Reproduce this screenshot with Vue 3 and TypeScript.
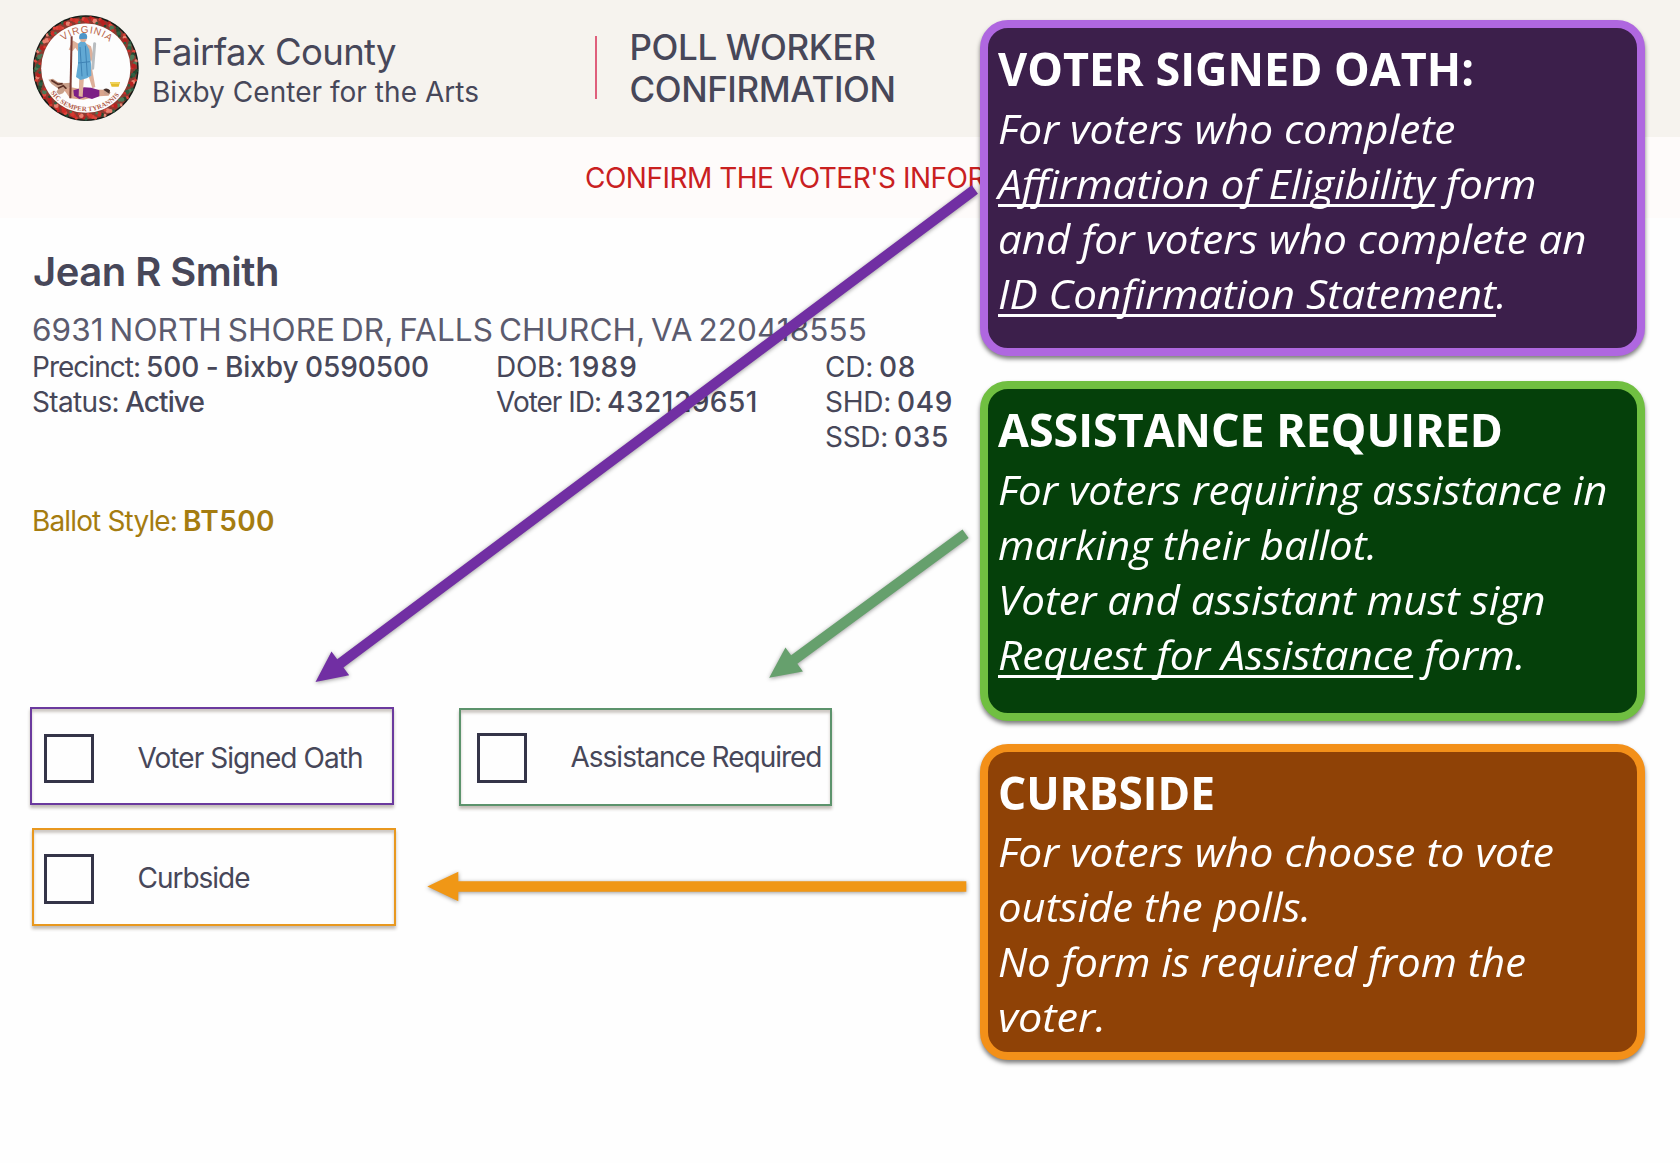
<script setup lang="ts">
import type { Directive } from 'vue'

interface Field { label: string; lw: number; value: string; vw: number }
interface Line { under?: string; text: string; width: number }
interface Callout { tone: string; title: string; titleWidth: number; lines: Line[] }
interface Blob { x: number; y: number; r: number; color: string }

// Tracks a single line of text so that it fills the given width.
const vTrack: Directive<HTMLElement, number> = {
  mounted(el, { value }) {
    const count = (el.textContent ?? '').length
    const natural = el.getBoundingClientRect().width
    el.style.letterSpacing = `${(value - natural) / count}px`
  },
}

// Condenses or widens a line horizontally to the given width.
const vStretch: Directive<HTMLElement, number> = {
  mounted(el, { value }) {
    const natural = el.getBoundingClientRect().width
    el.style.transform = `scaleX(${value / natural})`
  },
}

const columns: { name: string; fields: Field[] }[] = [
  {
    name: 'precinct',
    fields: [
      { label: 'Precinct:', lw: 108, value: '500 - Bixby 0590500', vw: 283 },
      { label: 'Status:', lw: 87, value: 'Active', vw: 79 },
    ],
  },
  {
    name: 'identity',
    fields: [
      { label: 'DOB:', lw: 67, value: '1989', vw: 69 },
      { label: 'Voter ID:', lw: 105, value: '432129651', vw: 151 },
    ],
  },
  {
    name: 'districts',
    fields: [
      { label: 'CD:', lw: 48, value: '08', vw: 37 },
      { label: 'SHD:', lw: 66, value: '049', vw: 56 },
      { label: 'SSD:', lw: 63, value: '035', vw: 55 },
    ],
  },
]

const options = [
  { tone: 'oath', label: 'Voter Signed Oath', width: 225 },
  { tone: 'assist', label: 'Assistance Required', width: 251 },
  { tone: 'curb', label: 'Curbside', width: 112 },
]

const callouts: Callout[] = [
  {
    tone: 'oath',
    title: 'VOTER SIGNED OATH:',
    titleWidth: 476,
    lines: [
      { text: 'For voters who complete', width: 457.5 },
      { under: 'Affirmation of Eligibility', text: ' form', width: 538.5 },
      { text: 'and for voters who complete an', width: 588.5 },
      { under: 'ID Confirmation Statement', text: '.', width: 508.5 },
    ],
  },
  {
    tone: 'assist',
    title: 'ASSISTANCE REQUIRED',
    titleWidth: 505,
    lines: [
      { text: 'For voters requiring assistance in', width: 609.5 },
      { text: 'marking their ballot.', width: 379 },
      { text: 'Voter and assistant must sign', width: 547.5 },
      { under: 'Request for Assistance', text: ' form.', width: 527.5 },
    ],
  },
  {
    tone: 'curb',
    title: 'CURBSIDE',
    titleWidth: 217,
    lines: [
      { text: 'For voters who choose to vote', width: 556 },
      { text: 'outside the polls.', width: 313 },
      { text: 'No form is required from the', width: 528 },
      { text: 'voter.', width: 108 },
    ],
  },
]

// Flowers and leaves of the wreath around the seal.
const palette = ['#d02c28', '#2f5f43', '#e0453c', '#b8201f', '#4c7a58', '#d43a30', '#24482f', '#e88070']
const wreath: Blob[] = []
for (let i = 0; i < 132; i++) {
  const angle = (i / 132) * Math.PI * 2
  const ring = 139 + ((i * 7) % 4) * 4.5
  wreath.push({
    x: 197.5 + Math.cos(angle) * ring,
    y: 189.5 + Math.sin(angle) * ring,
    r: 4 + ((i * 5) % 4),
    color: palette[(i * 5 + ((i * i) % 7)) % palette.length],
  })
}
</script>

<template>
  <div class="page">
    <header class="top">
      <svg class="seal" viewBox="0 0 390 390">
        <circle cx="197.5" cy="189.5" r="158.5" fill="#141a16" />
        <circle cx="197.5" cy="189.5" r="154" fill="#8c3a30" />
        <circle v-for="(b, i) in wreath" :key="i" :cx="b.x" :cy="b.y" :r="b.r" :fill="b.color" />
        <circle cx="197.5" cy="189.5" r="134" fill="#fdfdfd" />
        <path id="seal-top" d="M92 189.500 A105.500 105.500 0 0 1 303 189.500" fill="none" />
        <path id="seal-bottom" d="M68.500 189.500 A129 129 0 0 0 326.500 189.500" fill="none" />
        <text class="seal-name"><textPath href="#seal-top" startOffset="51%" text-anchor="middle">VIRGINIA</textPath></text>
        <text class="seal-motto"><textPath href="#seal-bottom" startOffset="49%" text-anchor="middle">SIC SEMPER TYRANNIS</textPath></text>
        <path d="M85 224 l14 -3 14 10 18 4 20 -2 4 12 -16 6 -10 14 -12 4 -8 -8 6 -10 -20 -14z" fill="#c9a08a" />
        <path d="M94 226 l20 12 14 -2 M114 250 l16 -8 14 14" stroke="#5c3026" stroke-width="5" fill="none" />
        <path d="M132 254 L150 246 180 252 250 254 272 262 266 272 236 274 190 284 150 280z" fill="#d9a48c" />
        <path d="M160 256 L192 247 214 248 238 256 238 274 216 282 196 276 178 282 162 272z" fill="#7c1f86" />
        <circle cx="260" cy="262" r="9" fill="#caa08c" />
        <path d="M250 254 q10 -8 20 2 l-2 10 z" fill="#46302a" />
        <path d="M178 212 L176 274 188 276 192 214z M204 208 L217 250 226 246 216 190z" fill="#deb09a" />
        <path d="M175 116 L158 106 146 134 158 138 166 128 176 142z M196 114 L213 124 220 150 214 170 204 160z" fill="#deb09a" />
        <path d="M174 116 L184 108 196 112 208 134 213 176 214 212 200 220 182 225 168 216 174 176z" fill="#62a9d4" />
        <path d="M180 126 L186 214 M196 122 L202 212 M174 174 L210 170" stroke="#3f83b5" stroke-width="3" fill="none" />
        <circle cx="190" cy="101" r="10" fill="#dcae98" />
        <path d="M178 103 q-3 -22 14 -19 q12 2 9 17z" fill="#4d95c9" />
        <path d="M155 94 L151 280" stroke="#7a3a33" stroke-width="6" />
        <path d="M224 116 L218 190" stroke="#b9bdc0" stroke-width="9" stroke-linecap="round" />
        <path d="M270 231 H300 L296 245 H275z" fill="#e3bd2c" />
        <path d="M273 234 H297" stroke="#fbe98a" stroke-width="3" />
      </svg>
      <div class="place">
        <div class="county"><span v-track="244">Fairfax County</span></div>
        <div class="site"><span v-track="327">Bixby Center for the Arts</span></div>
      </div>
      <div class="rule"></div>
      <div class="screen">
        <div><span v-track="246">POLL WORKER</span></div>
        <div><span v-track="266">CONFIRMATION</span></div>
      </div>
    </header>

    <div class="notice"><span v-track="400">CONFIRM THE VOTER'S INFOR</span></div>

    <main class="voter">
      <h1 class="name"><span v-track="246">Jean R Smith</span></h1>
      <div class="address"><span v-track="835">6931 NORTH SHORE DR, FALLS CHURCH, VA 220418555</span></div>
      <div class="details">
        <div v-for="col in columns" :key="col.name" :class="['col', col.name]">
          <div v-for="f in col.fields" :key="f.label" class="field">
            <span v-track="f.lw" class="label">{{ f.label }}</span>
            <span v-track="f.vw" class="value">{{ f.value }}</span>
          </div>
        </div>
      </div>
      <div class="field ballot">
        <span v-track="145" class="label">Ballot Style:</span>
        <span v-track="92" class="value">BT500</span>
      </div>
      <div class="options">
        <div v-for="o in options" :key="o.tone" :class="['option', o.tone]">
          <i class="check"></i>
          <span v-track="o.width">{{ o.label }}</span>
        </div>
      </div>
    </main>

    <svg class="arrows" viewBox="0 0 1680 1163">
      <g class="arrow" fill="#712fa3">
        <path transform="translate(315.500 682) rotate(-36.76)" d="M0 0 L31 -14.800 V-5.200 H823 V5.200 H31 V14.800z" />
      </g>
      <g class="arrow" fill="#66a06d">
        <path transform="translate(769.200 677.800) rotate(-36.25)" d="M0 0 L31 -14.800 V-5.200 H243.500 V5.200 H31 V14.800z" />
      </g>
      <g class="arrow" fill="#f09716">
        <path transform="translate(427.300 886.500)" d="M0 0 L31 -14.800 V-5.200 H539 V5.200 H31 V14.800z" />
      </g>
    </svg>

    <aside class="callouts">
      <section v-for="c in callouts" :key="c.tone" :class="['callout', c.tone]">
        <h2><span v-stretch="c.titleWidth">{{ c.title }}</span></h2>
        <p v-for="l in c.lines" :key="l.text + l.width"><span v-stretch="l.width"><u v-if="l.under">{{ l.under }}</u>{{ l.text }}</span></p>
      </section>
    </aside>
  </div>
</template>

<style>
body {
  margin: 0;
  background: #fefefe;
}
</style>

<style scoped>
.page {
  position: relative;
  width: 1680px;
  height: 1163px;
  overflow: hidden;
  background: #fefefe;
  color: #474759;
  font-family: Inter, "Liberation Sans", sans-serif;
  font-optical-sizing: none;
}
span {
  display: inline-block;
  white-space: pre;
}
.top {
  display: flex;
  align-items: flex-start;
  height: 137px;
  background: #f6f3ee;
}
.seal {
  flex: none;
  width: 130px;
  height: 130px;
  margin: 5px 0 0 20px;
}
.seal-name {
  font: 30px "Liberation Sans", sans-serif;
  letter-spacing: 2.5px;
  fill: #b9664c;
}
.seal-motto {
  font: bold 20px "Liberation Serif", serif;
  letter-spacing: 0.5px;
  fill: #b05a48;
}
.place {
  width: 443px;
  padding: 30px 0 0 2px;
}
.county {
  height: 44px;
  font-size: 36.5px;
  line-height: 44px;
}
.site {
  height: 36px;
  font-size: 28px;
  line-height: 36px;
}
.rule {
  width: 2px;
  height: 63px;
  margin-top: 36px;
  background: #df5f7b;
}
.screen {
  margin: 26px 0 0 32.5px;
  font-size: 35px;
  font-weight: 450;
  line-height: 42.4px;
}
.screen div {
  height: 42.4px;
}
.notice {
  height: 60px;
  padding: 21px 0 0 585px;
  background: #fefbfa;
  color: #c9201f;
  font-size: 28px;
  line-height: 40px;
}
.voter {
  padding: 29px 0 0 32px;
}
.name {
  height: 50px;
  margin: 0 0 0 1px;
  font-size: 40px;
  font-weight: 600;
  line-height: 50px;
}
.address {
  height: 40px;
  margin-top: 13px;
  color: #5b5b6e;
  font-size: 31.5px;
  line-height: 40px;
  word-spacing: -3px;
}
.details {
  display: flex;
  height: 105px;
}
.precinct {
  width: 464px;
}
.identity {
  width: 329px;
}
.field {
  display: flex;
  gap: 6px;
  height: 35px;
  font-size: 28px;
  line-height: 35px;
}
.label {
  font-weight: 400;
}
.value {
  font-weight: 500;
}
.precinct .value {
  word-spacing: -1px;
}
.ballot {
  margin-top: 49px;
  color: #a57c10;
}
.ballot .value {
  font-weight: 600;
}
.options {
  display: grid;
  grid-template-columns: 429px 374px;
  grid-template-rows: 98px 98px;
  row-gap: 24px;
  margin: 167.5px 0 0 -2px;
}
.option {
  display: flex;
  box-sizing: border-box;
  width: 364px;
  height: 98px;
  border: 2px solid #6b3a9e;
  padding: 25px 0 0 12px;
  font-size: 28px;
  font-weight: 400;
  line-height: 49px;
  box-shadow: 0 3px 3px rgba(60, 40, 20, 0.3), inset 0 3px 3px rgba(60, 40, 20, 0.25);
}
.option.assist {
  width: 373px;
  margin-top: 1.5px;
  border-color: #5c936c;
  padding: 23px 0 0 16px;
}
.option.curb {
  margin: -0.5px 0 0 2px;
  border-color: #e8981f;
  padding: 24px 0 0 10px;
}
.check {
  flex: none;
  box-sizing: border-box;
  width: 49.5px;
  height: 49.5px;
  margin-right: 44px;
  border: 3px solid #343448;
}
.arrows {
  position: absolute;
  inset: 0;
  width: 1680px;
  height: 1163px;
}
.arrow {
  filter: drop-shadow(0 1px 2px rgba(0, 0, 0, 0.4));
}
.callouts {
  position: absolute;
  top: 20px;
  left: 980px;
  display: flex;
  flex-direction: column;
  width: 665px;
  color: #fff;
  font-family: "Open Sans", "Noto Sans", sans-serif;
}
.callout {
  box-sizing: border-box;
  height: 336px;
  margin-bottom: 25px;
  border: 8px solid #af67e0;
  border-radius: 28px;
  padding: 11px 0 0 10px;
  background: #3c1f4b;
  box-shadow: 0 3px 4px rgba(0, 0, 0, 0.5);
}
.callout.assist {
  height: 339.5px;
  margin-bottom: 23px;
  border-color: #70bf41;
  background: #05400a;
}
.callout.curb {
  height: 316px;
  border-color: #f39019;
  background: #8f4206;
}
.callout span {
  transform-origin: 0 50%;
}
h2 {
  height: 61.5px;
  margin: 0;
  font-size: 46.5px;
  font-weight: 700;
  line-height: 59px;
}
p {
  height: 55px;
  margin: 0;
  font-size: 40.5px;
  font-style: italic;
  line-height: 55px;
}
.callout.curb h2 {
  height: 61px;
}
u {
  text-decoration-thickness: 3px;
  text-underline-offset: 5px;
  text-decoration-skip-ink: none;
}
</style>
